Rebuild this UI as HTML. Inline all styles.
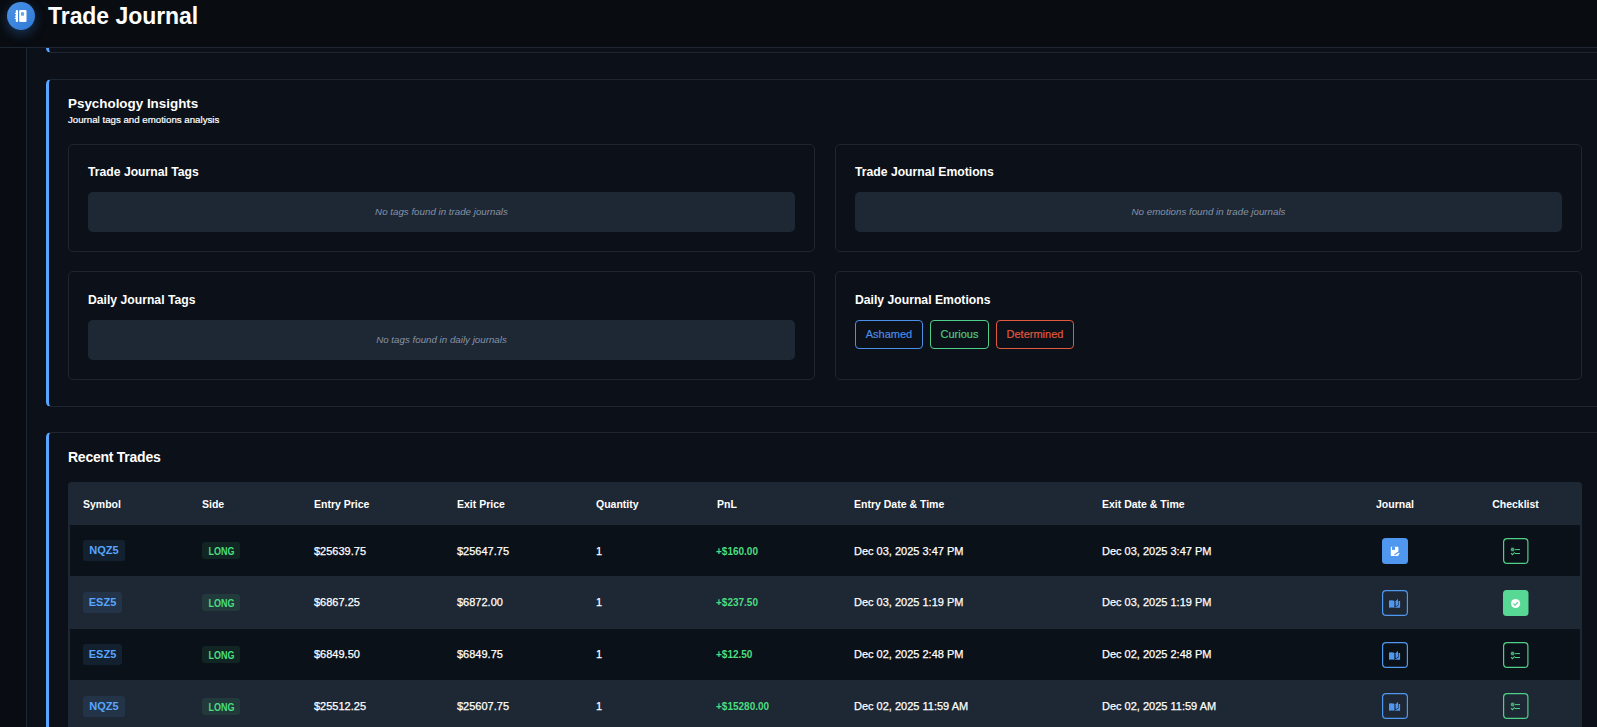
<!DOCTYPE html>
<html><head><meta charset="utf-8">
<style>
*{box-sizing:border-box;margin:0;padding:0}
html,body{width:1597px;height:727px;overflow:hidden;background:#0c1119;font-family:"Liberation Sans",sans-serif;color:#fff}
.a{position:absolute}
.t{position:absolute;line-height:1;white-space:nowrap}
.b{font-weight:700}
#side{left:0;top:48px;width:26px;height:679px;background:#090d13;border-right:1px solid #1e2631;width:27px}
#hdr{left:0;top:0;width:1597px;height:48px;background:#090c11;border-bottom:1px solid #1e2631}
.card{position:absolute;background:#0c1119;border:1px solid #1e2631;border-left:3px solid #58a6ff;border-radius:5px}
.ic{position:absolute;border:1px solid #1e2631;border-radius:5px;background:#0c1119}
.box{position:absolute;background:#1e2734;border-radius:5px}
.empty{position:absolute;line-height:1;white-space:nowrap;font-style:italic;color:#8594a8;text-align:center}
.pill{position:absolute;height:29px;border:1px solid;border-radius:4px;font-size:11px;line-height:27px;text-align:center;-webkit-text-stroke:0.15px currentColor}
.row{position:absolute;left:70px;width:1510px}
.sym{position:absolute;height:21px;border-radius:3px;background:rgba(88,166,255,0.1);color:#58a6ff;font-weight:700;font-size:11px;line-height:21px;text-align:center}
.long{position:absolute;height:17px;border-radius:3px;background:rgba(74,222,128,0.1);color:#4ade80;font-weight:700;font-size:10px;line-height:17px;text-align:center}
.cell{position:absolute;line-height:1;white-space:nowrap;font-size:11px;color:#fff;-webkit-text-stroke:0.25px #fff}
.pnl{position:absolute;line-height:1;white-space:nowrap;font-size:10px;font-weight:700;color:#4ade80}
.jb{position:absolute;width:26px;height:26px;border-radius:4px}
</style></head><body>

<div id="side" class="a"></div>

<!-- top card remnant -->
<div class="card" style="left:46px;top:20px;width:1600px;height:33px"></div>
<div id="hdr2" class="a" style="left:0;top:0;width:1597px;height:48px;background:#090c11;border-bottom:1px solid #1e2631"></div>
<div class="a" style="left:7px;top:2px;width:28px;height:28px;border-radius:50%;background:linear-gradient(135deg,#4a92e6,#2f7ad6);box-shadow:0 4px 12px rgba(60,130,220,0.35)"></div>
<svg class="a" style="left:7px;top:2px" width="28" height="28" viewBox="0 0 28 28"><rect x="8.8" y="8.1" width="2.2" height="11.9" rx="0.8" fill="#fff"/><circle cx="8.4" cy="11.4" r="0.6" fill="#fff"/><circle cx="8.4" cy="14.2" r="0.6" fill="#fff"/><circle cx="8.4" cy="16.4" r="0.7" fill="#fff"/><rect x="12.2" y="8.1" width="7.3" height="11.9" rx="1.2" fill="#fff"/><rect x="14" y="10.2" width="3" height="3.6" fill="#8ab8f0"/><path d="M13.9,11.2 H16.9 M13.9,12.6 H16.9" stroke="#3d86dd" stroke-width="0.5"/></svg>
<div class="t b" style="left:48px;top:4.5px;font-size:23px;letter-spacing:-0.05px;color:#fff">Trade Journal</div>

<!-- psychology card -->
<div class="card" style="left:46px;top:79px;width:1560px;height:328px"></div>
<div class="t b" style="left:68px;top:97px;font-size:13.4px">Psychology Insights</div>
<div class="t" style="left:68px;top:114.5px;font-size:9.7px;color:#fff;-webkit-text-stroke:0.2px #fff">Journal tags and emotions analysis</div>

<div class="ic" style="left:68px;top:144px;width:747px;height:108px"></div>
<div class="ic" style="left:835px;top:144px;width:747px;height:108px"></div>
<div class="ic" style="left:68px;top:271px;width:747px;height:109px"></div>
<div class="ic" style="left:835px;top:271px;width:747px;height:109px"></div>

<div class="t b" style="left:88px;top:165.5px;font-size:12.2px">Trade Journal Tags</div>
<div class="t b" style="left:855px;top:165.5px;font-size:12.2px">Trade Journal Emotions</div>
<div class="t b" style="left:88px;top:293.5px;font-size:12.2px">Daily Journal Tags</div>
<div class="t b" style="left:855px;top:293.5px;font-size:12.2px">Daily Journal Emotions</div>

<div class="box" style="left:88px;top:192px;width:707px;height:40px"></div>
<div class="box" style="left:855px;top:192px;width:707px;height:40px"></div>
<div class="box" style="left:88px;top:320px;width:707px;height:40px"></div>

<div class="empty" style="left:88px;width:707px;top:207.2px;font-size:9.75px">No tags found in trade journals</div>
<div class="empty" style="left:855px;width:707px;top:207.2px;font-size:9.75px">No emotions found in trade journals</div>
<div class="empty" style="left:88px;width:707px;top:335px;font-size:9.75px">No tags found in daily journals</div>

<div class="pill" style="left:855px;top:320px;width:68px;color:#4a8fe8;border-color:#4a8fe8">Ashamed</div>
<div class="pill" style="left:930px;top:320px;width:59px;color:#4fcf87;border-color:#4fcf87">Curious</div>
<div class="pill" style="left:996px;top:320px;width:78px;color:#e05a3e;border-color:#e05a3e">Determined</div>

<!-- recent trades card -->
<div class="card" style="left:46px;top:432px;width:1560px;height:400px"></div>
<div class="t b" style="left:68px;top:449.9px;font-size:14px;letter-spacing:-0.25px">Recent Trades</div>

<div class="a" style="left:68px;top:482px;width:1514px;height:260px;background:#1e2734;border-radius:4px"></div>
<div class="t b" style="left:83px;top:499px;font-size:10.5px">Symbol</div>
<div class="t b" style="left:202px;top:499px;font-size:10.5px">Side</div>
<div class="t b" style="left:314px;top:499px;font-size:10.5px">Entry Price</div>
<div class="t b" style="left:457px;top:499px;font-size:10.5px">Exit Price</div>
<div class="t b" style="left:596px;top:499px;font-size:10.5px">Quantity</div>
<div class="t b" style="left:717px;top:499px;font-size:10.5px">PnL</div>
<div class="t b" style="left:854px;top:499px;font-size:10.5px">Entry Date &amp; Time</div>
<div class="t b" style="left:1102px;top:499px;font-size:10.5px">Exit Date &amp; Time</div>
<div class="t b" style="left:1339px;width:112px;text-align:center;top:499px;font-size:10.5px">Journal</div>
<div class="t b" style="left:1451px;width:129px;text-align:center;top:499px;font-size:10.5px">Checklist</div>

<div class="row" style="top:525px;height:51px;background:#0b1119"></div>
<div class="row" style="top:576px;height:53px;background:#1e2734"></div>
<div class="row" style="top:629px;height:51px;background:#0b1119"></div>
<div class="row" style="top:680px;height:52px;background:#1e2734"></div>

<!-- row 1 -->
<div class="sym" style="left:83px;top:540px;width:42px">NQZ5</div>
<div class="long" style="left:202px;top:542px;width:38px"><span style="display:inline-block;transform:translateY(0.8px) scaleX(0.9)">LONG</span></div>
<div class="cell" style="left:314px;top:545.7px">$25639.75</div>
<div class="cell" style="left:457px;top:545.7px">$25647.75</div>
<div class="cell" style="left:596px;top:545.7px">1</div>
<div class="pnl" style="left:716px;top:546.5px">+$160.00</div>
<div class="cell" style="left:854px;top:545.7px">Dec 03, 2025 3:47 PM</div>
<div class="cell" style="left:1102px;top:545.7px">Dec 03, 2025 3:47 PM</div>

<!-- row 2 -->
<div class="sym" style="left:83px;top:592px;width:39px">ESZ5</div>
<div class="long" style="left:202px;top:594px;width:38px"><span style="display:inline-block;transform:translateY(0.8px) scaleX(0.9)">LONG</span></div>
<div class="cell" style="left:314px;top:596.7px">$6867.25</div>
<div class="cell" style="left:457px;top:596.7px">$6872.00</div>
<div class="cell" style="left:596px;top:596.7px">1</div>
<div class="pnl" style="left:716px;top:597.8px">+$237.50</div>
<div class="cell" style="left:854px;top:596.7px">Dec 03, 2025 1:19 PM</div>
<div class="cell" style="left:1102px;top:596.7px">Dec 03, 2025 1:19 PM</div>

<!-- row 3 -->
<div class="sym" style="left:83px;top:644px;width:39px">ESZ5</div>
<div class="long" style="left:202px;top:646px;width:38px"><span style="display:inline-block;transform:translateY(0.8px) scaleX(0.9)">LONG</span></div>
<div class="cell" style="left:314px;top:648.7px">$6849.50</div>
<div class="cell" style="left:457px;top:648.7px">$6849.75</div>
<div class="cell" style="left:596px;top:648.7px">1</div>
<div class="pnl" style="left:716px;top:649.8px">+$12.50</div>
<div class="cell" style="left:854px;top:648.7px">Dec 02, 2025 2:48 PM</div>
<div class="cell" style="left:1102px;top:648.7px">Dec 02, 2025 2:48 PM</div>

<!-- row 4 -->
<div class="sym" style="left:83px;top:696px;width:42px">NQZ5</div>
<div class="long" style="left:202px;top:698px;width:38px"><span style="display:inline-block;transform:translateY(0.8px) scaleX(0.9)">LONG</span></div>
<div class="cell" style="left:314px;top:700.7px">$25512.25</div>
<div class="cell" style="left:457px;top:700.7px">$25607.75</div>
<div class="cell" style="left:596px;top:700.7px">1</div>
<div class="pnl" style="left:716px;top:701.5px">+$15280.00</div>
<div class="cell" style="left:854px;top:700.7px">Dec 02, 2025 11:59 AM</div>
<div class="cell" style="left:1102px;top:700.7px">Dec 02, 2025 11:59 AM</div>

<svg class="a" style="left:1382px;top:538px" width="26" height="26" viewBox="0 0 26 26"><rect x="0" y="0" width="26" height="26" rx="3.5" fill="#4f97ef"/><rect x="8.8" y="8.8" width="7.6" height="9.1" rx="0.6" fill="#fff"/><rect x="10" y="8.5" width="3" height="3.4" fill="#4f97ef"/><path d="M12.2,16.2 L16.8,13.2 L17.2,14.6 L12.8,17.6 Z" fill="#4f97ef"/><path d="M13.8,17.6 L17.3,15.3" stroke="#fff" stroke-width="1.3"/></svg>
<svg class="a" style="left:1503px;top:538px" width="26" height="26" viewBox="0 0 26 26"><rect x="0.6" y="0.6" width="24.3" height="24.8" rx="3.5" fill="none" stroke="#4fcf87" stroke-width="1.2"/><rect x="8.3" y="10.2" width="2.6" height="2.6" rx="0.4" fill="#3a9a66" stroke="#4fcf87" stroke-width="0.8"/><path d="M12,11.6 L17,11.6 M12,15.5 L17,15.5" stroke="#4fcf87" stroke-width="1"/><path d="M8.1,15.2 L9.4,16.6 L11.8,14.3" stroke="#4fcf87" stroke-width="1.1" fill="none"/></svg>
<svg class="a" style="left:1382px;top:590px" width="26" height="26" viewBox="0 0 26 26"><rect x="0.6" y="0.6" width="24.8" height="24.8" rx="3.5" fill="none" stroke="#4f97ef" stroke-width="1.2"/><path d="M7,10.6 Q9.6,9.9 12.4,10.7 L12.4,17.8 Q9.6,17.1 7,17.8 Z" fill="#4f97ef"/><path d="M16.6,11 L18.1,11 L18.1,17.8 L12.6,17.8 L16.6,15.2 Z" fill="#4f97ef"/><path d="M13.6,11.2 L16,8.8 L16,14.8 L13.6,16.6 Z" fill="#4f97ef"/></svg>
<svg class="a" style="left:1503px;top:590px" width="26" height="26" viewBox="0 0 26 26"><rect x="0" y="0" width="25.5" height="26" rx="3.5" fill="#57d894"/><circle cx="12.6" cy="13.5" r="4.6" fill="#fff"/><path d="M10.4,13.6 L12,15.1 L14.9,12.2" stroke="#57d894" stroke-width="1.3" fill="none"/></svg>
<svg class="a" style="left:1382px;top:642px" width="26" height="26" viewBox="0 0 26 26"><rect x="0.6" y="0.6" width="24.8" height="24.8" rx="3.5" fill="none" stroke="#4f97ef" stroke-width="1.2"/><path d="M7,10.6 Q9.6,9.9 12.4,10.7 L12.4,17.8 Q9.6,17.1 7,17.8 Z" fill="#4f97ef"/><path d="M16.6,11 L18.1,11 L18.1,17.8 L12.6,17.8 L16.6,15.2 Z" fill="#4f97ef"/><path d="M13.6,11.2 L16,8.8 L16,14.8 L13.6,16.6 Z" fill="#4f97ef"/></svg>
<svg class="a" style="left:1503px;top:642px" width="26" height="26" viewBox="0 0 26 26"><rect x="0.6" y="0.6" width="24.3" height="24.8" rx="3.5" fill="none" stroke="#4fcf87" stroke-width="1.2"/><rect x="8.3" y="10.2" width="2.6" height="2.6" rx="0.4" fill="#3a9a66" stroke="#4fcf87" stroke-width="0.8"/><path d="M12,11.6 L17,11.6 M12,15.5 L17,15.5" stroke="#4fcf87" stroke-width="1"/><path d="M8.1,15.2 L9.4,16.6 L11.8,14.3" stroke="#4fcf87" stroke-width="1.1" fill="none"/></svg>
<svg class="a" style="left:1382px;top:693px" width="26" height="26" viewBox="0 0 26 26"><rect x="0.6" y="0.6" width="24.8" height="24.8" rx="3.5" fill="none" stroke="#4f97ef" stroke-width="1.2"/><path d="M7,10.6 Q9.6,9.9 12.4,10.7 L12.4,17.8 Q9.6,17.1 7,17.8 Z" fill="#4f97ef"/><path d="M16.6,11 L18.1,11 L18.1,17.8 L12.6,17.8 L16.6,15.2 Z" fill="#4f97ef"/><path d="M13.6,11.2 L16,8.8 L16,14.8 L13.6,16.6 Z" fill="#4f97ef"/></svg>
<svg class="a" style="left:1503px;top:693px" width="26" height="26" viewBox="0 0 26 26"><rect x="0.6" y="0.6" width="24.3" height="24.8" rx="3.5" fill="none" stroke="#4fcf87" stroke-width="1.2"/><rect x="8.3" y="10.2" width="2.6" height="2.6" rx="0.4" fill="#3a9a66" stroke="#4fcf87" stroke-width="0.8"/><path d="M12,11.6 L17,11.6 M12,15.5 L17,15.5" stroke="#4fcf87" stroke-width="1"/><path d="M8.1,15.2 L9.4,16.6 L11.8,14.3" stroke="#4fcf87" stroke-width="1.1" fill="none"/></svg>
</body></html>
